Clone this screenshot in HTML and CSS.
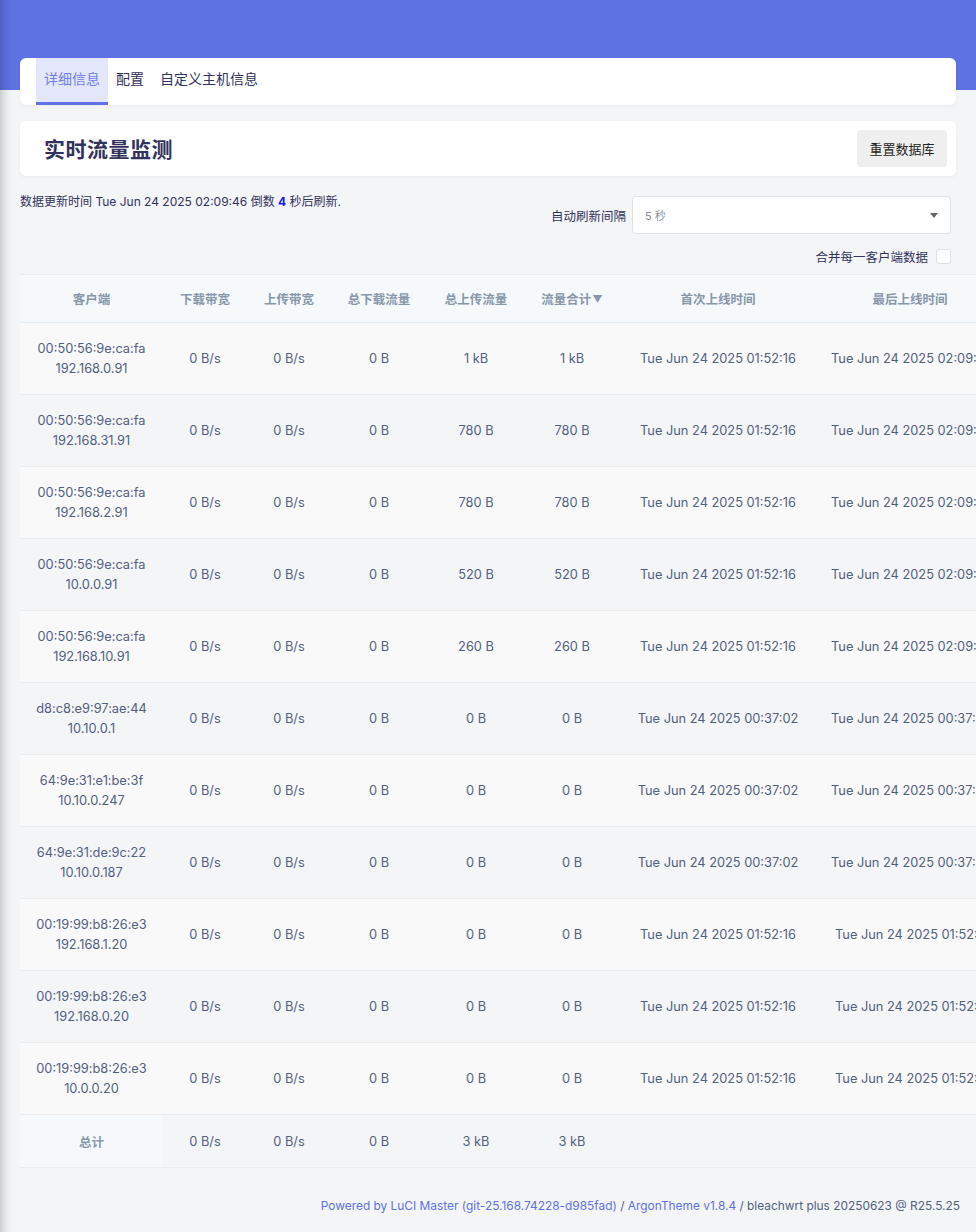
FILE: index.html
```html
<!DOCTYPE html>
<html lang="zh-CN">
<head>
<meta charset="utf-8">
<title>实时流量监测</title>
<link rel="stylesheet" href="styles.css">
</head>
<body>
<div class="edge-shadow"></div>
<main class="main">
  <nav class="tabs">
    <a class="tab active">详细信息</a>
    <a class="tab">配置</a>
    <a class="tab">自定义主机信息</a>
  </nav>

  <section class="title-card">
    <h2 class="title">实时流量监测</h2>
    <button class="btn">重置数据库</button>
  </section>

  <div class="status">
    <div class="update-text">数据更新时间 Tue Jun 24 2025 02:09:46 倒数 <b class="count">4</b> 秒后刷新.</div>
    <div class="controls">
      <div class="control-row">
        <label class="ctl-label">自动刷新间隔</label>
        <div class="select"><span class="select-value">5 秒</span><span class="caret"></span></div>
      </div>
      <div class="control-row merge">
        <label class="ctl-label">合并每一客户端数据</label>
        <span class="checkbox"></span>
      </div>
    </div>
  </div>

  <div class="table-wrap">
    <table class="tbl">
      <colgroup>
        <col class="c1"><col class="c2"><col class="c3"><col class="c4"><col class="c5"><col class="c6"><col class="c7"><col class="c8">
      </colgroup>
      <thead>
        <tr>
          <th>客户端</th><th>下载带宽</th><th>上传带宽</th><th>总下载流量</th><th>总上传流量</th><th>流量合计<span class="sort">▼</span></th><th>首次上线时间</th><th>最后上线时间</th>
        </tr>
      </thead>
      <tbody>
        <tr><td>00:50:56:9e:ca:fa<br>192.168.0.91</td><td>0 B/s</td><td>0 B/s</td><td>0 B</td><td>1 kB</td><td>1 kB</td><td>Tue Jun 24 2025 01:52:16</td><td class="last">Tue Jun 24 2025 02:09:46</td></tr>
        <tr><td>00:50:56:9e:ca:fa<br>192.168.31.91</td><td>0 B/s</td><td>0 B/s</td><td>0 B</td><td>780 B</td><td>780 B</td><td>Tue Jun 24 2025 01:52:16</td><td class="last">Tue Jun 24 2025 02:09:46</td></tr>
        <tr><td>00:50:56:9e:ca:fa<br>192.168.2.91</td><td>0 B/s</td><td>0 B/s</td><td>0 B</td><td>780 B</td><td>780 B</td><td>Tue Jun 24 2025 01:52:16</td><td class="last">Tue Jun 24 2025 02:09:46</td></tr>
        <tr><td>00:50:56:9e:ca:fa<br>10.0.0.91</td><td>0 B/s</td><td>0 B/s</td><td>0 B</td><td>520 B</td><td>520 B</td><td>Tue Jun 24 2025 01:52:16</td><td class="last">Tue Jun 24 2025 02:09:46</td></tr>
        <tr><td>00:50:56:9e:ca:fa<br>192.168.10.91</td><td>0 B/s</td><td>0 B/s</td><td>0 B</td><td>260 B</td><td>260 B</td><td>Tue Jun 24 2025 01:52:16</td><td class="last">Tue Jun 24 2025 02:09:46</td></tr>
        <tr><td>d8:c8:e9:97:ae:44<br>10.10.0.1</td><td>0 B/s</td><td>0 B/s</td><td>0 B</td><td>0 B</td><td>0 B</td><td>Tue Jun 24 2025 00:37:02</td><td class="last">Tue Jun 24 2025 00:37:02</td></tr>
        <tr><td>64:9e:31:e1:be:3f<br>10.10.0.247</td><td>0 B/s</td><td>0 B/s</td><td>0 B</td><td>0 B</td><td>0 B</td><td>Tue Jun 24 2025 00:37:02</td><td class="last">Tue Jun 24 2025 00:37:02</td></tr>
        <tr><td>64:9e:31:de:9c:22<br>10.10.0.187</td><td>0 B/s</td><td>0 B/s</td><td>0 B</td><td>0 B</td><td>0 B</td><td>Tue Jun 24 2025 00:37:02</td><td class="last">Tue Jun 24 2025 00:37:02</td></tr>
        <tr><td>00:19:99:b8:26:e3<br>192.168.1.20</td><td>0 B/s</td><td>0 B/s</td><td>0 B</td><td>0 B</td><td>0 B</td><td>Tue Jun 24 2025 01:52:16</td><td class="last shift">Tue Jun 24 2025 01:52:16</td></tr>
        <tr><td>00:19:99:b8:26:e3<br>192.168.0.20</td><td>0 B/s</td><td>0 B/s</td><td>0 B</td><td>0 B</td><td>0 B</td><td>Tue Jun 24 2025 01:52:16</td><td class="last shift">Tue Jun 24 2025 01:52:16</td></tr>
        <tr><td>00:19:99:b8:26:e3<br>10.0.0.20</td><td>0 B/s</td><td>0 B/s</td><td>0 B</td><td>0 B</td><td>0 B</td><td>Tue Jun 24 2025 01:52:16</td><td class="last shift">Tue Jun 24 2025 01:52:16</td></tr>
      </tbody>
      <tfoot>
        <tr class="total"><th>总计</th><td>0 B/s</td><td>0 B/s</td><td>0 B</td><td>3 kB</td><td>3 kB</td><td class="empty"></td><td class="empty"></td></tr>
      </tfoot>
    </table>
  </div>

  <footer class="footer">
    <a class="link">Powered by LuCI Master (git-25.168.74228-d985fad)</a> / <a class="link">ArgonTheme v1.8.4</a> / bleachwrt plus 20250623 @ R25.5.25
  </footer>
</main>
</body>
</html>
```

FILE: styles.css
```css
html, body {
  margin: 0;
  padding: 0;
}

body {
  width: 976px;
  min-height: 1232px;
  overflow: hidden;
  background: linear-gradient(#5e72e4 0, #5e72e4 90px, #f4f5f7 90px) no-repeat;
  background-color: #f4f5f7;
  font-family: Inter, "Noto Sans CJK SC", sans-serif;
  color: #32325d;
}

.edge-shadow {
  position: fixed;
  left: 0;
  top: 0;
  bottom: 0;
  width: 12px;
  background: linear-gradient(to right, rgba(0, 0, 0, 0.16), rgba(0, 0, 0, 0.05) 50%, rgba(0, 0, 0, 0));
  pointer-events: none;
  z-index: 5;
}

.main {
  padding: 58px 20px 0 20px;
}

/* Tabs */
.tabs {
  display: flex;
  height: 47px;
  background: #fff;
  border-radius: 6px;
  padding-left: 16px;
  box-shadow: 0 1px 3px rgba(50, 50, 93, 0.06);
  box-sizing: border-box;
}

.tab {
  display: flex;
  align-items: center;
  padding: 0 8px 7px 8px;
  font-size: 14px;
  color: #32325d;
  box-sizing: border-box;
  height: 47px;
}

.tab.active {
  background: #e4e7fb;
  color: #6f80e6;
  border-bottom: 3px solid #5e72e4;
  padding-bottom: 4px;
}

/* Title card */
.title-card {
  margin-top: 16px;
  height: 55px;
  background: #fff;
  border-radius: 6px;
  display: flex;
  align-items: center;
  justify-content: space-between;
  padding: 0 9px 0 24px;
  box-shadow: 0 1px 3px rgba(50, 50, 93, 0.06);
}

.title {
  margin: 0 0 2px 0;
  font-size: 21px;
  font-weight: 700;
  color: #32325d;
  letter-spacing: 0.5px;
}

.btn {
  width: 90px;
  height: 37px;
  border: none;
  border-radius: 4px;
  background: #efefef;
  font-family: Inter, "Noto Sans CJK SC", sans-serif;
  font-size: 13px;
  color: #222;
  padding: 0;
}

/* Status */
.status {
  display: flex;
  justify-content: space-between;
  align-items: flex-start;
  margin-top: 17px;
}

.update-text {
  font-size: 12px;
  line-height: 18px;
  color: #32325d;
}

.count {
  color: #1a1aff;
  font-weight: 700;
}

.controls {
  display: flex;
  flex-direction: column;
  align-items: flex-end;
  padding-top: 3px;
  padding-right: 5px;
}

.control-row {
  display: flex;
  align-items: center;
}

.control-row.merge {
  margin-top: 13px;
}

.ctl-label {
  font-size: 12.5px;
  color: #32325d;
}

.select {
  margin-left: 6px;
  width: 319px;
  height: 38px;
  box-sizing: border-box;
  border: 1px solid #dee2e6;
  border-radius: 4px;
  background: #fff;
  display: flex;
  align-items: center;
  justify-content: space-between;
  padding: 0 12px 0 12px;
}

.select-value {
  font-size: 11px;
  color: #8a8f98;
}

.caret {
  width: 0;
  height: 0;
  border-left: 4px solid transparent;
  border-right: 4px solid transparent;
  border-top: 5px solid #666;
}

.checkbox {
  margin-left: 8px;
  width: 15px;
  height: 15px;
  box-sizing: border-box;
  border: 1px solid #dee2e6;
  border-radius: 3px;
  background: #fff;
}

/* Table */
.table-wrap {
  margin-top: 8px;
  margin-right: -20px;
  overflow: hidden;
}

.tbl {
  table-layout: fixed;
  width: 983px;
  border-collapse: collapse;
  font-size: 12.8px;
  color: #525f7f;
}

.c1 { width: 143px; }
.c2 { width: 84px; }
.c3 { width: 84px; }
.c4 { width: 96px; }
.c5 { width: 98px; }
.c6 { width: 94px; }
.c7 { width: 198px; }
.c8 { width: 186px; }

.tbl thead th {
  height: 47px;
  background: #f6f9fc;
  color: #8898aa;
  font-weight: 700;
  font-size: 12.5px;
  text-align: center;
  padding: 0;
  border-top: 1px solid #e9ecef;
  border-bottom: 1px solid #e9ecef;
  white-space: nowrap;
}

.sort {
  font-size: 10px;
  margin-left: 1px;
  vertical-align: 1px;
}

.tbl tbody td {
  height: 71px;
  padding: 0;
  text-align: center;
  line-height: 19.5px;
  border-bottom: 1px solid #e9ecef;
  white-space: nowrap;
}

.tbl tbody tr:nth-child(odd) td {
  background: #f9f9f9;
}

.tbl tbody tr:nth-child(even) td {
  background: #f4f5f7;
}

.tbl td.last {
  text-align: left;
  padding-left: 14px;
}

.tbl td.last.shift {
  padding-left: 18px;
}

.tbl tfoot th,
.tbl tfoot td {
  height: 52px;
  padding: 0;
  text-align: center;
  border-bottom: 1px solid #e9ecef;
  white-space: nowrap;
}

.tbl tfoot th {
  background: #f6f9fc;
  color: #8898aa;
  font-weight: 700;
  font-size: 12.5px;
}

.tbl tfoot td {
  background: #f4f5f7;
}

/* Footer */
.footer {
  text-align: right;
  font-size: 11.9px;
  line-height: 20px;
  color: #525f7f;
  padding: 28px 0 0 0;
  margin-right: -4px;
}

.link {
  color: #5e72e4;
}
```
